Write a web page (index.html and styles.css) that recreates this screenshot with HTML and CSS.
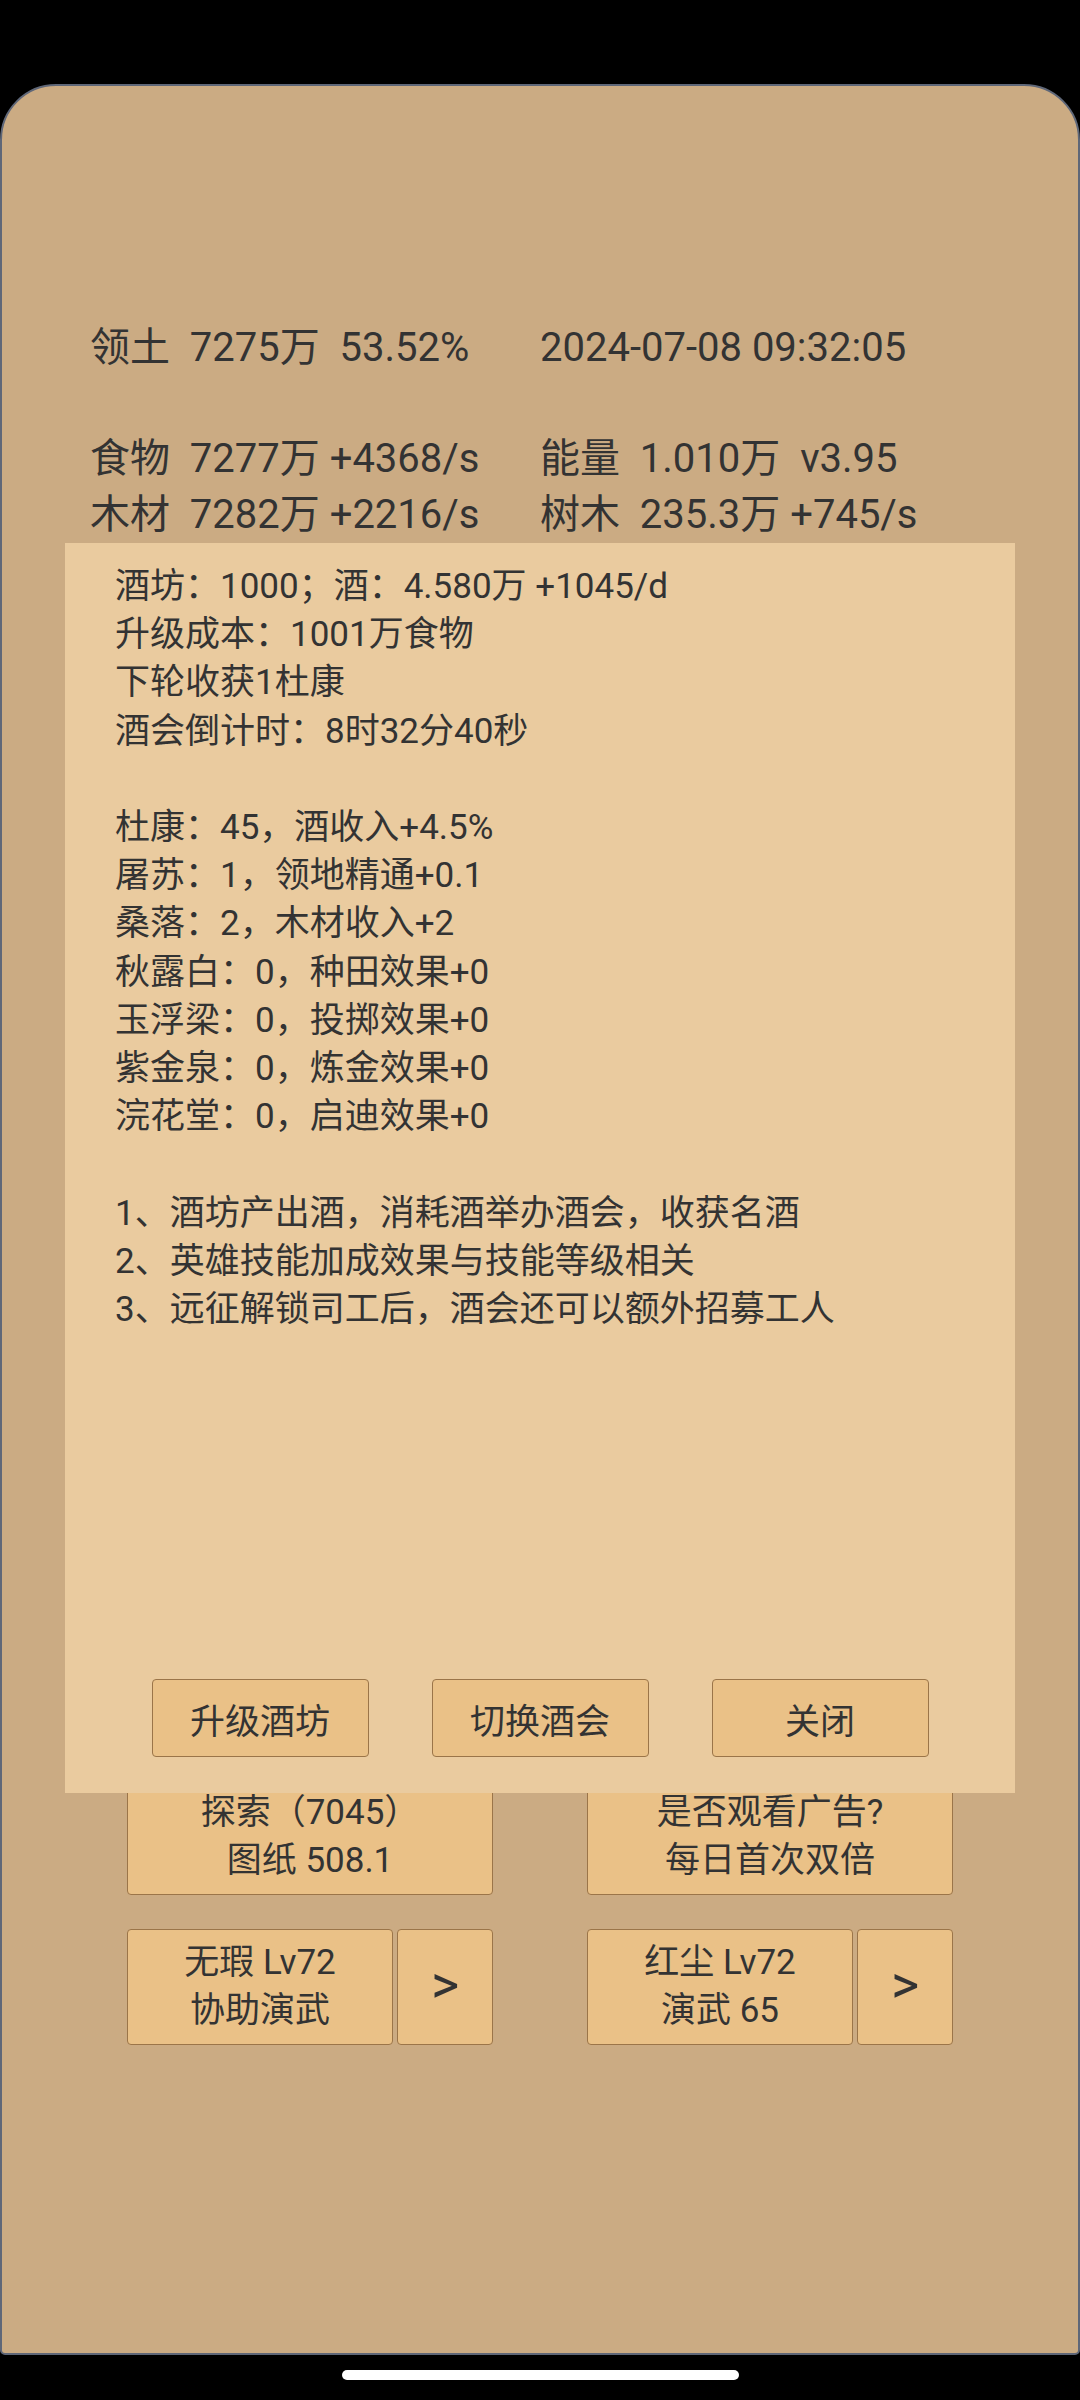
FILE: index.html
```html
<!DOCTYPE html>
<html lang="zh-CN">
<head>
<meta charset="utf-8">
<title>酒坊</title>
<link rel="stylesheet" href="styles.css">
</head>
<body>
<div class="screen">
  <div class="panel">
    <div class="stats">
      <div class="cell">领土&nbsp;&nbsp;7275万&nbsp;&nbsp;53.52%</div>
      <div class="cell">2024-07-08 09:32:05</div>
      <div class="cell blank">&nbsp;</div>
      <div class="cell blank">&nbsp;</div>
      <div class="cell">食物&nbsp;&nbsp;7277万 +4368/s</div>
      <div class="cell">能量&nbsp;&nbsp;1.010万&nbsp;&nbsp;v3.95</div>
      <div class="cell">木材&nbsp;&nbsp;7282万 +2216/s</div>
      <div class="cell">树木&nbsp;&nbsp;235.3万 +745/s</div>
    </div>

    <div class="actions">
      <div class="action-row">
        <div class="btn big"><span>探索（7045）</span><span>图纸 508.1</span></div>
        <div class="btn big"><span>是否观看广告?</span><span>每日首次双倍</span></div>
      </div>
      <div class="action-row">
        <div class="pair">
          <div class="btn main"><span>无瑕 Lv72</span><span>协助演武</span></div>
          <div class="btn arrow">&gt;</div>
        </div>
        <div class="pair">
          <div class="btn main"><span>红尘 Lv72</span><span>演武 65</span></div>
          <div class="btn arrow">&gt;</div>
        </div>
      </div>
    </div>

    <div class="dialog">
      <div class="dialog-text">
        <div class="para">
          <div>酒坊：1000；酒：4.580万 +1045/d</div>
          <div>升级成本：1001万食物</div>
          <div>下轮收获1杜康</div>
          <div>酒会倒计时：8时32分40秒</div>
        </div>
        <div class="para">
          <div>杜康：45，酒收入+4.5%</div>
          <div>屠苏：1，领地精通+0.1</div>
          <div>桑落：2，木材收入+2</div>
          <div>秋露白：0，种田效果+0</div>
          <div>玉浮梁：0，投掷效果+0</div>
          <div>紫金泉：0，炼金效果+0</div>
          <div>浣花堂：0，启迪效果+0</div>
        </div>
        <div class="para">
          <div>1、酒坊产出酒，消耗酒举办酒会，收获名酒</div>
          <div>2、英雄技能加成效果与技能等级相关</div>
          <div>3、远征解锁司工后，酒会还可以额外招募工人</div>
        </div>
      </div>
      <div class="dialog-buttons">
        <div class="dbtn">升级酒坊</div>
        <div class="dbtn">切换酒会</div>
        <div class="dbtn">关闭</div>
      </div>
    </div>
  </div>
  <div class="home-bar"></div>
</div>
</body>
</html>
```

FILE: styles.css
```css
html, body {
  margin: 0;
  padding: 0;
  background: #000;
}

body {
  width: 1080px;
  height: 2400px;
  overflow: hidden;
  font-family: Roboto, "Noto Sans CJK SC", sans-serif;
  color: #333333;
}

.screen {
  padding-top: 84px;
  display: flex;
  flex-direction: column;
  align-items: center;
}

.panel {
  position: relative;
  box-sizing: border-box;
  width: 1080px;
  height: 2271px;
  background: #cbab83;
  border: 2px solid #5f6778;
  border-radius: 56px 56px 5px 5px;
}

.stats {
  display: grid;
  grid-template-columns: 450px 1fr;
  padding: 234px 0 0 88px;
  font-size: 40px;
  line-height: 55.5px;
  white-space: nowrap;
}

.actions {
  margin-top: 1237px;
  padding-left: 125px;
  display: flex;
  flex-direction: column;
  gap: 34px;
}

.action-row {
  display: flex;
  gap: 94px;
}

.pair {
  display: flex;
  gap: 4px;
}

.btn {
  box-sizing: border-box;
  height: 116px;
  background: #eac187;
  border: 1.5px solid #9b7549;
  border-radius: 4px;
  display: flex;
  flex-direction: column;
  align-items: center;
  justify-content: center;
  font-size: 35px;
  line-height: 48.5px;
  white-space: nowrap;
}

.btn.big {
  width: 366px;
}

.btn.main {
  width: 266px;
}

.btn.arrow {
  width: 96px;
  font-size: 54px;
  line-height: 1;
  padding-bottom: 4px;
}

.dialog {
  position: absolute;
  top: 457px;
  left: 63px;
  width: 950px;
  height: 1250px;
  box-sizing: border-box;
  background: #eacb9f;
  display: flex;
  flex-direction: column;
  padding: 20px 0 36px 50px;
}

.dialog-text {
  font-size: 35px;
  line-height: 48.2px;
  white-space: nowrap;
}

.para + .para {
  margin-top: 48.2px;
}

.dialog-buttons {
  margin-top: auto;
  margin-left: -50px;
  display: flex;
  justify-content: center;
  gap: 63px;
}

.dbtn {
  box-sizing: border-box;
  width: 217px;
  height: 78px;
  background: #eac187;
  border: 1.5px solid #9b7549;
  border-radius: 4px;
  display: flex;
  align-items: center;
  justify-content: center;
  font-size: 35px;
}

.home-bar {
  margin-top: 15px;
  width: 397px;
  height: 10px;
  border-radius: 5px;
  background: #ffffff;
}
```
